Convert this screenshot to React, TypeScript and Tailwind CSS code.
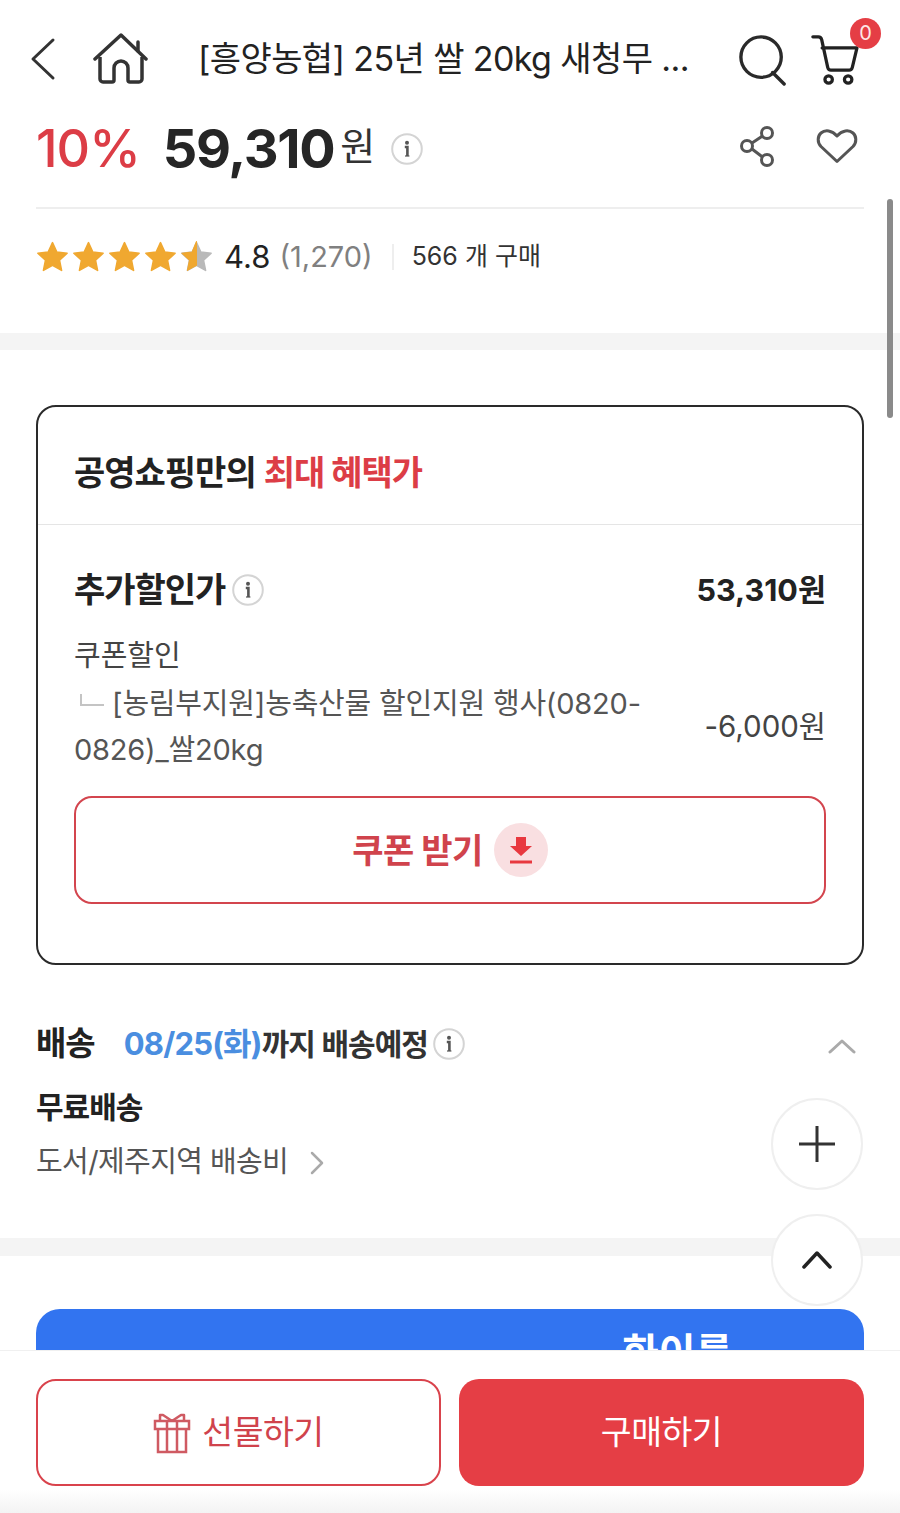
import React from 'react';

const InfoIcon = ({ size = 32 }: { size?: number }) => (
  <svg width={size} height={size} viewBox="0 0 32 32" fill="none" className="shrink-0">
    <circle cx="16" cy="16" r="14.8" stroke="#d4d4d4" strokeWidth="2" />
    <circle cx="16" cy="9.800" r="2" fill="#555" />
    <path d="M13.800 14h2.600v9" stroke="#555" strokeWidth="2.600" />
    <path d="M14 23h4.400" stroke="#555" strokeWidth="1.200" />
  </svg>
);

const starPath = 'M16 2.500l4.200 9.100 10 1.200-7.400 6.800 2 9.900L16 24.600l-8.800 4.900 2-9.900-7.400-6.800 10-1.200z';

const Star = ({ half }: { half?: boolean }) => (
  <svg width="33" height="33" viewBox="0 0 32 32" className="shrink-0">
    <path d={starPath} fill={half ? '#b9b9b9' : '#f0a830'} stroke={half ? '#b9b9b9' : '#f0a830'} strokeWidth="1.500" strokeLinejoin="round" />
    {half && <path d="M16 1.500v23.100l-8.800 4.900 2-9.900-7.400-6.800 10-1.200z" fill="#f0a830" stroke="#f0a830" strokeWidth="1" strokeLinejoin="round" />}
  </svg>
);

const Header = () => (
  <div className="h-[110px] pt-[9px] pl-[30px] pr-[36px] flex items-center">
    <svg width="26" height="44" viewBox="0 0 26 44" fill="none" className="mt-[-2px]">
      <path d="M23 3L3 22l20 19" stroke="#333" strokeWidth="3" strokeLinecap="round" strokeLinejoin="round" />
    </svg>
    <svg width="56" height="52" viewBox="0 0 56 52" fill="none" className="ml-[37px] mt-[-2px]">
      <path d="M2 26L28 2l25 24" stroke="#333" strokeWidth="3.500" strokeLinecap="round" strokeLinejoin="round" />
      <path d="M45 18V9" stroke="#333" strokeWidth="3.500" strokeLinecap="round" />
      <path d="M7 24v22a3 3 0 003 3h9a2 2 0 002-2V35a7 7 0 0114 0v12a2 2 0 002 2h9a3 3 0 003-3V24" stroke="#333" strokeWidth="3.500" strokeLinejoin="round" />
    </svg>
    <div className="ml-[49px] w-[490px] text-[34px] leading-none text-[#222] whitespace-nowrap tracking-[-0.6px] mt-[-2px]">
      [흥양농협] 25년 쌀 20kg 새청무 ...
    </div>
    <svg width="50" height="52" viewBox="0 0 52 54" fill="none" className="ml-[50px]">
      <circle cx="24" cy="24" r="21" stroke="#2a2a2a" strokeWidth="3.500" />
      <path d="M36 40l12 12" stroke="#2a2a2a" strokeWidth="3.500" strokeLinecap="round" />
    </svg>
    <div className="relative ml-[23px] w-[52px] h-[54px]">
      <svg width="52" height="54" viewBox="0 0 56 56" fill="none">
        <path d="M2 3h6c2 0 3 1 3.500 3L18 36c.5 2 1.500 3 3.500 3H41c2 0 3-1 3.500-3l5-21H12" stroke="#222" strokeWidth="3.500" strokeLinecap="round" strokeLinejoin="round" />
        <circle cx="19" cy="49" r="4" stroke="#222" strokeWidth="3.500" />
        <circle cx="40" cy="49" r="4" stroke="#222" strokeWidth="3.500" />
      </svg>
      <span className="absolute top-[-15px] right-[-18px] w-[31px] h-[31px] rounded-full bg-[#e53e45] text-[#fde8e8] text-[20px] leading-[31px] text-center">0</span>
    </div>
  </div>
);

export default function App() {
  return (
    <div className="relative w-[900px] h-[1513px] overflow-hidden bg-white text-[#222]" style={{ fontFamily: '"Inter", "Noto Sans CJK KR", sans-serif' }}>
      <Header />

      <div className="px-[36px]">
        <div className="h-[99px] flex items-start border-b-2 border-[#eeeeee]">
          <div className="h-[78px] flex items-center w-full">
            <span className="text-[52px] leading-none text-[#dc3d46] font-medium tracking-[-1px]">10%</span>
            <span className="ml-[23px] text-[54px] leading-none font-bold text-[#262626] tracking-[-1.300px]">59,310</span>
            <span className="ml-[6px] text-[38px] leading-none text-[#333] mt-[-6px]">원</span>
            <span className="ml-[16px]"><InfoIcon /></span>
            <svg width="36" height="42" viewBox="0 0 36 42" fill="none" className="ml-auto mr-[-3px] mt-[-4px]">
              <circle cx="8" cy="20" r="5.500" stroke="#555" strokeWidth="3" />
              <circle cx="28" cy="7" r="5.500" stroke="#555" strokeWidth="3" />
              <circle cx="28" cy="34" r="5.500" stroke="#555" strokeWidth="3" />
              <path d="M13 17l10.500-7M13 23l10.500 8" stroke="#555" strokeWidth="3" />
            </svg>
            <svg width="42" height="36" viewBox="0 0 42 36" fill="none" className="ml-[44px] mr-[6px] mt-[-6px]">
              <path d="M21 33.500L5 18.500C1 14 1.500 8 5 5c4-3.500 11-3 16 3 5-6 12-6.500 16-3 3.500 3 4 9 0 13.500z" stroke="#555" strokeWidth="3" strokeLinejoin="round" />
            </svg>
          </div>
        </div>

        <div className="h-[95px] flex items-center">
          <div className="flex items-center">
            <Star /><span className="w-[3px]" /><Star /><span className="w-[3px]" /><Star /><span className="w-[3px]" /><Star /><span className="w-[3px]" /><Star half />
          </div>
          <span className="ml-[11px] text-[31px] leading-none">4.8</span>
          <span className="ml-[9px] text-[29px] leading-none text-[#808080]">(1,270)</span>
          <span className="ml-[19px] w-[2px] h-[26px] bg-[#eeeeee]" />
          <span className="ml-[18px] text-[25px] leading-none text-[#333]">566 개 구매</span>
        </div>
      </div>

      <div className="mt-[29px] h-[17px] bg-[#f4f4f4]" />

      <div className="mx-[36px] mt-[55px] h-[560px] rounded-[20px] border-2 border-[#2a2a2a] flex flex-col">
        <div className="h-[118px] pt-[14px] px-[36px] flex items-center border-b border-[#e5e5e5] text-[34px] font-bold tracking-[-1px]">
          공영쇼핑만의<span className="ml-[8px] text-[#dc3d46]">최대 혜택가</span>
        </div>
        <div className="px-[36px] flex flex-col">
          <div className="mt-[42px] flex items-center justify-between h-[46px]">
            <div className="flex items-center">
              <span className="text-[34px] font-bold leading-none tracking-[-1px]">추가할인가</span>
              <span className="ml-[7px]"><InfoIcon /></span>
            </div>
            <span className="text-[30.500px] font-bold leading-none">53,310원</span>
          </div>
          <div className="mt-[20px] text-[29px] leading-[46px] text-[#444]">쿠폰할인</div>
          <div className="flex items-center justify-between mt-[2px]">
            <div className="w-[580px] text-[29px] leading-[46px] text-[#555] tracking-[-0.2px]">
              <span className="inline-block w-[24px] h-[12px] ml-[6px] mr-[8px] mb-[8px] border-l-2 border-b-2 border-[#c4c4c4]" />
              [농림부지원]농축산물 할인지원 행사(0820-0826)_쌀20kg
            </div>
            <span className="text-[29.500px] leading-none text-[#444]">-6,000원</span>
          </div>
          <div className="mt-[23px] h-[108px] rounded-[18px] border-[2.500px] border-[#d3454e] flex items-center justify-center">
            <span className="text-[34px] font-bold text-[#d0434c] tracking-[-0.5px]">쿠폰 받기</span>
            <span className="ml-[11px] w-[54px] h-[54px] rounded-full bg-[#f9dfe1] flex items-center justify-center">
              <svg width="24" height="28" viewBox="0 0 24 28">
                <path d="M7 1h10v9h6L12 20 1 10h6z" fill="#e8383f" />
                <path d="M1 26h22" stroke="#e8383f" strokeWidth="3" />
              </svg>
            </span>
          </div>
        </div>
      </div>

      <div className="px-[36px]">
        <div className="mt-[56px] flex items-center h-[46px]">
          <span className="text-[33px] font-bold tracking-[-1px]">배송</span>
          <span className="ml-[29px] text-[31px] font-bold text-[#4a8ee0] tracking-[-0.8px]">08/25(화)</span>
          <span className="text-[30px] font-semibold text-[#333] tracking-[-1px]">까지 배송예정</span>
          <span className="ml-[5px]"><InfoIcon /></span>
          <svg width="28" height="16" viewBox="0 0 28 16" fill="none" className="ml-auto mr-[8px] mt-[4px]">
            <path d="M2 14L14 3l12 11" stroke="#aaa" strokeWidth="3" strokeLinecap="round" strokeLinejoin="round" />
          </svg>
        </div>
        <div className="mt-[18px] text-[30px] leading-[44px] font-bold tracking-[-1px]">무료배송</div>
        <div className="mt-[10px] flex items-center h-[46px]">
          <span className="text-[29px] text-[#555] tracking-[-0.6px]">도서/제주지역 배송비</span>
          <svg width="14" height="24" viewBox="0 0 14 24" fill="none" className="ml-[22px] mt-[2px]">
            <path d="M2 2l10 10L2 22" stroke="#aaa" strokeWidth="2.500" strokeLinecap="round" strokeLinejoin="round" />
          </svg>
        </div>
      </div>

      <div className="mt-[53px] h-[18px] bg-[#f4f4f4]" />

      <div className="mx-[36px] mt-[53px] h-[120px] rounded-t-[24px] bg-[#3274f0] text-white text-[40px] font-bold pl-[586px] pt-[14px]">
        화이를
      </div>

      {/* scrollbar */}
      <div className="absolute left-[887px] top-[199px] w-[6px] h-[219px] rounded-full bg-[#8a8a8a]" />

      {/* floating buttons */}
      <div className="absolute left-[771px] top-[1098px] flex flex-col gap-[24px]">
        <button className="w-[92px] h-[92px] rounded-full bg-white border-2 border-[#efefef] flex items-center justify-center">
          <svg width="38" height="38" viewBox="0 0 38 38" fill="none">
            <path d="M19 1v36M1 19h36" stroke="#333" strokeWidth="3" />
          </svg>
        </button>
        <button className="w-[92px] h-[92px] rounded-full bg-white border-2 border-[#efefef] flex items-center justify-center">
          <svg width="30" height="20" viewBox="0 0 30 20" fill="none">
            <path d="M2 17L15 3l13 14" stroke="#222" strokeWidth="3.500" strokeLinecap="round" strokeLinejoin="round" />
          </svg>
        </button>
      </div>

      {/* bottom bar */}
      <div className="absolute left-0 right-0 top-[1350px] h-[163px] bg-white border-t border-[#f0f0f0] px-[36px] pt-[28px] flex gap-[18px]">
        <button className="w-[405px] h-[107px] rounded-[20px] border-2 border-[#d9434c] bg-white flex items-center justify-center text-[#d0434c] text-[33.500px] tracking-[-0.5px]">
          <svg width="38" height="42" viewBox="0 0 38 42" fill="none" className="mr-[11px]">
            <path d="M2 9h34v8H2zM5 17v23h28V17M14 9v31M24 9v31" stroke="#cf5a62" strokeWidth="2.500" />
            <path d="M19 9L10 3H7v6M19 9l9-6h3v6" stroke="#cf5a62" strokeWidth="2.500" strokeLinejoin="round" />
          </svg>
          선물하기
        </button>
        <button className="w-[405px] h-[107px] rounded-[20px] bg-[#e53e45] text-white text-[33.500px] tracking-[-0.5px]">구매하기</button>
      </div>
      <div className="absolute left-0 right-0 bottom-0 h-[24px] bg-gradient-to-b from-white to-[#f3f3f3]" />
    </div>
  );
}
